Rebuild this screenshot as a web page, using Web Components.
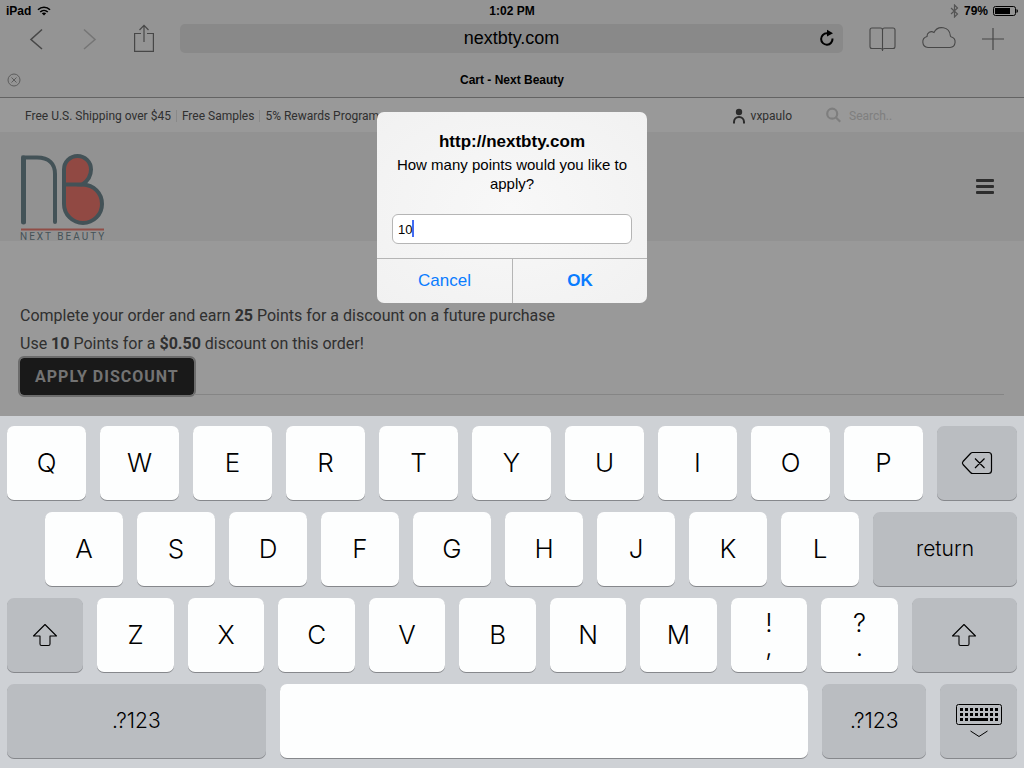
<!DOCTYPE html>
<html lang="en">
<head>
<meta charset="utf-8">
<meta name="viewport" content="width=device-width, initial-scale=1">
<title>Cart - Next Beauty</title>
<style>
html, body {
    height: 100%;
    margin: 0;
}
body {
    font-family: "Liberation Sans", Arial, sans-serif;
    color: #000;
}
</style>
</head>
<body>
<tablet-screen>
    <status-bar></status-bar>
    <browser-toolbar address="nextbty.com"></browser-toolbar>
    <tab-strip>Cart - Next Beauty</tab-strip>
    <shop-page>
        <promo-bar slot="top" user="vxpaulo">
            <a href="#shipping">Free U.S. Shipping over $45</a>
            <a href="#samples">Free Samples</a>
            <a href="#rewards">5% Rewards Program</a>
        </promo-bar>
        <shop-header slot="top"></shop-header>
        <reward-offer>
            <span slot="earn">Complete your order and earn <b>25</b> Points for a discount on a future purchase</span>
            <span slot="use">Use <b>10</b> Points for a <b>$0.50</b> discount on this order!</span>
        </reward-offer>
    </shop-page>
    <prompt-dialog slot="overlay" value="10">
        <span slot="title">http://nextbty.com</span>
        How many points would you like to apply?
    </prompt-dialog>
    <soft-keyboard slot="keyboard"></soft-keyboard>
</tablet-screen>

<script>
// creates the template and registers the element
function define(name, html, setup) {
    const template = document.createElement('template');
    template.innerHTML = html;

    customElements.define(name, class extends HTMLElement {
        constructor() {
            super();
            this._sR = this.attachShadow({mode: 'open'});
            this._sR.appendChild(template.content.cloneNode(true));
        }

        connectedCallback() {
            if (setup) setup(this, this._sR);
        }
    });
}

define('tablet-screen', `
<style>
:host {
    display: flex;
    flex-direction: column;
    min-height: 100vh;
    background: #fff;
}
.view {
    position: relative;
    flex: 1;
    display: flex;
    flex-direction: column;
}
</style>
<div class="view">
    <slot></slot>
    <slot name="overlay"></slot>
</div>
<slot name="keyboard"></slot>
`);

define('status-bar', `
<style>
:host {
    display: grid;
    grid-template-columns: 1fr auto 1fr;
    align-items: center;
    height: 22px;
    padding: 0 6px;
    background: #f7f7f7;
    font-size: 12px;
    font-weight: bold;
}
div {
    display: flex;
    align-items: center;
    gap: 6px;
}
.right {
    justify-content: flex-end;
    gap: 5px;
}
svg { display: block; }
</style>
<div>
    <span>iPad</span>
    <svg width="14" height="10" viewBox="0 0 14 10" fill="none" stroke="#000" stroke-width="1.6">
        <path d="M1 3.8C4.4.3 9.6.3 13 3.8M3.2 6C5.4 3.9 8.6 3.9 10.8 6"/>
        <path d="M4.8 7.3C6 6.1 8 6.1 9.2 7.3L7 9.6Z" fill="#000" stroke="none"/>
    </svg>
</div>
<span>1:02 PM</span>
<div class="right">
    <svg width="9" height="14" viewBox="0 0 9 14" fill="none" stroke="#8c8c8c" stroke-width="1.2">
        <path d="M1 4L7.5 10L4.5 13V1L7.5 4L1 10"/>
    </svg>
    <span>79%</span>
    <svg width="25" height="10" viewBox="0 0 25 10">
        <rect x=".5" y=".5" width="22" height="9" rx="2" fill="none" stroke="#000"/>
        <rect x="2" y="2" width="15" height="6" fill="#000"/>
        <path d="M23.5 3Q25 3.5 25 5T23.5 7Z"/>
    </svg>
</div>
`);

define('browser-toolbar', `
<style>
:host {
    display: flex;
    align-items: center;
    box-sizing: border-box;
    height: 36px;
    padding: 1px 20px 4px 26px;
    background: #f7f7f7;
}
button {
    display: flex;
    justify-content: center;
    padding: 0;
    border: 0;
    background: none;
    flex: none;
}
svg { display: block; }
.nav {
    display: flex;
    align-items: center;
    gap: 34px;
    padding-right: 26px;
}
.nav button { width: 20px; }
.field {
    display: flex;
    align-items: center;
    flex: 1;
    min-width: 0;
    height: 29px;
    padding: 0 8px 0 24px;
    border-radius: 5px;
    background: #e4e4e4;
}
input {
    flex: 1;
    min-width: 0;
    padding: 0;
    border: 0;
    background: none;
    font: 18px "Liberation Sans", Arial, sans-serif;
    text-align: center;
    color: #000;
}
.tools {
    display: flex;
    align-items: center;
    gap: 25px;
    padding-left: 26px;
}
</style>
<div class="nav">
    <button aria-label="Back"><svg width="14" height="22" viewBox="0 0 14 22" fill="none" stroke="#777" stroke-width="1.6"><path d="M13 1.5L2 11.5L13 21"/></svg></button>
    <button aria-label="Forward"><svg width="14" height="22" viewBox="0 0 14 22" fill="none" stroke="#c4c4c4" stroke-width="1.6"><path d="M1 1.5L12 11.5L1 21"/></svg></button>
    <button aria-label="Share"><svg width="20" height="30" viewBox="0 0 20 30" fill="none" stroke="#777" stroke-width="1.2"><path d="M7 9.5H.6V27.4H19.4V9.5H13M10 18V1.5M5.5 6L10 1.4L14.5 6"/></svg></button>
</div>
<div class="field">
    <input type="text" aria-label="Address" readonly>
    <button aria-label="Reload"><svg width="16" height="20" viewBox="0 0 16 20" fill="none" stroke="#000" stroke-width="2"><path d="M10.5 4.3H8A5.7 5.7 0 1 0 13.5 9.5"/><path d="M8 .8L14 4.2L8 7.6Z" fill="#000" stroke="none"/></svg></button>
</div>
<div class="tools">
    <button aria-label="Bookmarks"><svg width="27" height="26" viewBox="0 0 27 26" fill="none" stroke="#777" stroke-width="1.1"><path d="M13.5 25V4Q13.5 2 11.500 2H3Q1 2 1 4V20.500Q1 22.500 3 22.500H11.500Q13.500 22.500 13.500 24Q13.500 22.500 15.500 22.500H24Q26 22.500 26 20.500V4Q26 2 24 2H15.500Q13.500 2 13.500 4"/></svg></button>
    <button aria-label="iCloud tabs"><svg width="36" height="26" viewBox="0 0 36 26" fill="none" stroke="#777" stroke-width="1.1"><path d="M7 21.5H29A5.5 5.5 0 0 0 30 10.7Q29.300 10.400 29.300 9.500A8.600 8.600 0 0 0 13 6.500A4.500 4.500 0 0 0 6 10.500A5.600 5.600 0 0 0 7 21.500Z"/></svg></button>
    <button aria-label="New tab"><svg width="22" height="22" viewBox="0 0 22 22" stroke="#777" stroke-width="1.2"><path d="M11 0V22M0 11H22"/></svg></button>
</div>
`, (el, root) => {
    root.querySelector('input').value = el.getAttribute('address');
});

define('tab-strip', `
<style>
:host {
    display: grid;
    grid-template-columns: 20px 1fr 20px;
    align-items: center;
    height: 40px;
    padding: 4px 4px 0;
    box-sizing: border-box;
    border-bottom: 1px solid #a6a6a6;
    background: #f7f7f7;
    font-size: 12px;
    font-weight: bold;
}
button {
    padding: 0;
    border: 0;
    background: none;
    display: flex;
    justify-content: center;
}
span { text-align: center; }
</style>
<button aria-label="Close tab"><svg width="14" height="14" viewBox="0 0 14 14" fill="none" stroke="#9a9a9a"><circle cx="7" cy="7" r="6"/><path d="M4.5 4.5L9.5 9.5M9.5 4.5L4.5 9.5"/></svg></button>
<span><slot></slot></span>
`);

define('shop-page', `
<style>
:host {
    display: block;
    flex: 1;
    font-family: Roboto, sans-serif;
    color: #505050;
}
main { padding: 61px 20px 16px; }
</style>
<slot name="top"></slot>
<main><slot></slot></main>
`);

define('promo-bar', `
<style>
:host {
    display: flex;
    align-items: center;
    box-sizing: border-box;
    height: 34px;
    padding: 2px 25px 0;
    font-size: 12px;
}
nav {
    display: flex;
    flex: 1;
}
::slotted(a) {
    color: inherit;
    text-decoration: none;
    line-height: 12px;
    padding-right: 5px;
    margin-right: 5px;
    border-right: 1px solid #e4e4e4;
}
::slotted(a:last-child) { border: 0; }
.user {
    display: flex;
    align-items: center;
    gap: 5px;
    color: inherit;
    text-decoration: none;
}
label {
    display: flex;
    align-items: center;
    gap: 8px;
    margin-left: 34px;
}
input {
    width: 150px;
    padding: 0;
    border: 0;
    background: none;
    font: 12px Roboto, sans-serif;
}
input::placeholder { color: #d4d4d4; }
</style>
<nav><slot></slot></nav>
<a class="user" href="#account">
    <svg width="14" height="16" viewBox="0 0 14 16"><circle cx="7" cy="4" r="3.2" fill="#484848"/><path d="M2 15.5V14A5 5 0 0 1 12 14V15.5" fill="none" stroke="#484848" stroke-width="2"/></svg>
    <span></span>
</a>
<label>
    <svg width="15" height="18" viewBox="0 0 15 18" fill="none" stroke="#d2d2d2" stroke-width="2.2"><circle cx="6.2" cy="6.7" r="5"/><path d="M10 10.5L14.2 14.7"/></svg>
    <input type="text" placeholder="Search.." aria-label="Search">
</label>
`, (el, root) => {
    root.querySelector('.user span').textContent = el.getAttribute('user');
});

define('shop-header', `
<style>
:host {
    display: flex;
    justify-content: space-between;
    align-items: center;
    height: 109px;
    padding: 0 29px 0 20px;
    background: #f4f4f4;
}
.logo {
    display: flex;
    flex-direction: column;
    align-self: flex-end;
    gap: 1px;
    color: #758b93;
    text-decoration: none;
    font: 10px/9px Roboto, sans-serif;
    letter-spacing: 2px;
}
svg { display: block; }
button {
    padding: 0;
    border: 0;
    background: none;
}
</style>
<a class="logo" href="#home" aria-label="Next Beauty">
    <svg width="85" height="78" viewBox="0 0 85 78" fill="none" stroke="#718992" stroke-width="4" stroke-linecap="round">
        <path d="M44 31V16.500A13.500 13.500 0 0 1 71 16.500Q71 25.500 62.500 31.500C74 32 82 40 82 51A19 19 0 0 1 44 51Z" fill="#f27b70"/>
        <path d="M44 31.500H62"/>
        <path d="M3.500 69V4.500H17C29 4.500 35 11 35 21V69"/>
        <path d="M3.500 5V69" stroke-width="5"/>
        <path d="M1 76.500H84" stroke="#f08075" stroke-width="2" stroke-linecap="butt"/>
    </svg>
    <span>NEXT BEAUTY</span>
</a>
<button aria-label="Menu"><svg width="20" height="16" viewBox="0 0 20 16" fill="#4b4b4b"><rect x="1" y="0" width="18" height="3" rx="1"/><rect x="1" y="6" width="18" height="3" rx="1"/><rect x="1" y="12" width="18" height="3" rx="1"/></svg></button>
`);

define('reward-offer', `
<style>
:host {
    display: block;
    font-size: 16px;
    line-height: 28px;
}
p { margin: 0; }
.action {
    display: flex;
    align-items: flex-end;
}
button {
    height: 37px;
    padding: 0 15px;
    border: 0;
    border-radius: 4px;
    outline: 2px solid #b4b4b4;
    background: #2b2b2b;
    color: #c0c0c0;
    font: bold 16px Roboto, sans-serif;
    letter-spacing: 1px;
}
hr {
    flex: 1;
    margin: 0;
    border: 0;
    border-top: 1px solid #dedede;
}
</style>
<p><slot name="earn"></slot></p>
<p><slot name="use"></slot></p>
<div class="action">
    <button>APPLY DISCOUNT</button>
    <hr>
</div>
`);

define('prompt-dialog', `
<style>
:host {
    position: absolute;
    inset: 0;
    display: flex;
    align-items: center;
    justify-content: center;
    padding-bottom: 1px;
    background: rgba(0, 0, 0, 0.4);
}
form {
    width: 270px;
    border-radius: 7px;
    overflow: hidden;
    background: radial-gradient(#f8f8f8, #f1f1f1);
    text-align: center;
}
.body { padding: 19px 15px 14px; }
h1 {
    margin: 0 0 3px;
    font-size: 17px;
    line-height: 21px;
}
label {
    display: block;
    margin-bottom: 21px;
    font-size: 15px;
    line-height: 19px;
}
.entry { position: relative; }
input {
    display: block;
    box-sizing: border-box;
    width: 100%;
    height: 30px;
    padding: 0 5px;
    border: 1px solid #b5b5b5;
    border-radius: 6px;
    outline: 0;
    background: #fff;
    font: 13px "Liberation Sans", Arial, sans-serif;
}
/* insertion mark after the typed number */
i {
    position: absolute;
    left: 20px;
    top: 6px;
    width: 2px;
    height: 17px;
    background: #426bf2;
}
.actions {
    display: grid;
    grid-template-columns: 1fr 1fr;
    border-top: 1px solid #b5b5b5;
}
button {
    height: 44px;
    padding: 0;
    border: 0;
    background: none;
    color: #0a7cff;
    font: 17px "Liberation Sans", Arial, sans-serif;
}
button + button {
    border-left: 1px solid #b5b5b5;
    font-weight: bold;
}
</style>
<form role="dialog">
    <div class="body">
        <h1><slot name="title"></slot></h1>
        <label for="points"><slot></slot></label>
        <div class="entry">
            <input id="points" type="text">
            <i></i>
        </div>
    </div>
    <div class="actions">
        <button type="button">Cancel</button>
        <button type="button">OK</button>
    </div>
</form>
`, (el, root) => {
    root.querySelector('input').value = el.getAttribute('value');
});

define('key-cap', `
<style>
:host {
    display: flex;
    flex: 1 1 0;
    min-width: 0;
}
button {
    display: flex;
    flex-direction: column;
    align-items: center;
    justify-content: center;
    width: 100%;
    height: 74px;
    padding: 0;
    border: 0;
    border-radius: 7px;
    background: #fdfefe;
    box-shadow: 0 1px 0 #86888c;
    color: #000;
    font: 300 26px/28px Inter, "Liberation Sans", sans-serif;
}
:host([dark]) button {
    background: #babdc1;
    font-size: 21px;
}
:host([stacked]) button {
    line-height: 24px;
    white-space: pre-line;
}
</style>
<button><slot></slot></button>
`, (el, root) => {
    el.style.flexGrow = el.getAttribute('size');
    const name = el.getAttribute('name');
    if (name) root.querySelector('button').setAttribute('aria-label', name);
});

const shift = `<svg width="26" height="24" viewBox="0 0 26 24" fill="none" stroke="#000" stroke-width="1.1" stroke-linejoin="round"><path d="M13 1.5L24.5 13H18V21Q18 22.5 16.5 22.5H9.5Q8 22.5 8 21V13H1.5Z"/></svg>`;
const erase = `<svg width="32" height="24" viewBox="0 0 32 24" fill="none" stroke="#000" stroke-width="1.2"><path d="M11.5 1.5H27.5Q30.5 1.5 30.5 4.5V19.5Q30.5 22.5 27.5 22.5H11.5Q10.5 22.5 9.5 21.5L2 13.5Q.8 12 2 10.5L9.5 2.5Q10.5 1.5 11.5 1.5ZM14 7.5L23.5 17M23.5 7.5L14 17"/></svg>`;
const hide = `<svg width="46" height="34" viewBox="0 0 46 34" fill="none" stroke="#000"><rect x=".5" y=".5" width="45" height="20" rx="2"/><path d="M4 5.5H42M4 10.5H42" stroke-width="3" stroke-dasharray="3 2"/><path d="M4 15.5H12M34 15.5H42" stroke-width="3" stroke-dasharray="3 2"/><path d="M14 15.5H32" stroke-width="3"/><path d="M14.5 27L23 32.5L31.5 27"/></svg>`;

function letters(text, size) {
    return [...text].map(c => `<key-cap size="${size}">${c}</key-cap>`).join('');
}

define('soft-keyboard', `
<style>
:host {
    display: flex;
    flex-direction: column;
    gap: 12px;
    padding: 10px 7px;
    background: #ced1d5;
}
.row {
    display: flex;
    gap: 14px;
}
.inset { padding-left: 38px; }
svg { display: block; }
</style>
<div class="row">${letters('QWERTYUIOP', 79)}<key-cap dark size="80" name="Delete">${erase}</key-cap></div>
<div class="row inset">${letters('ASDFGHJKL', 78)}<key-cap dark size="144">return</key-cap></div>
<div class="row">
    <key-cap dark size="77" name="Shift">${shift}</key-cap>${letters('ZXCVBNM', 77)}
    <key-cap stacked size="77">!\n,</key-cap>
    <key-cap stacked size="77">?\n.</key-cap>
    <key-cap dark size="106" name="Shift">${shift}</key-cap>
</div>
<div class="row">
    <key-cap dark size="259">.?123</key-cap>
    <key-cap size="529" name="Space"></key-cap>
    <key-cap dark size="104">.?123</key-cap>
    <key-cap dark size="77" name="Hide keyboard">${hide}</key-cap>
</div>
`);
</script>
</body>
</html>
